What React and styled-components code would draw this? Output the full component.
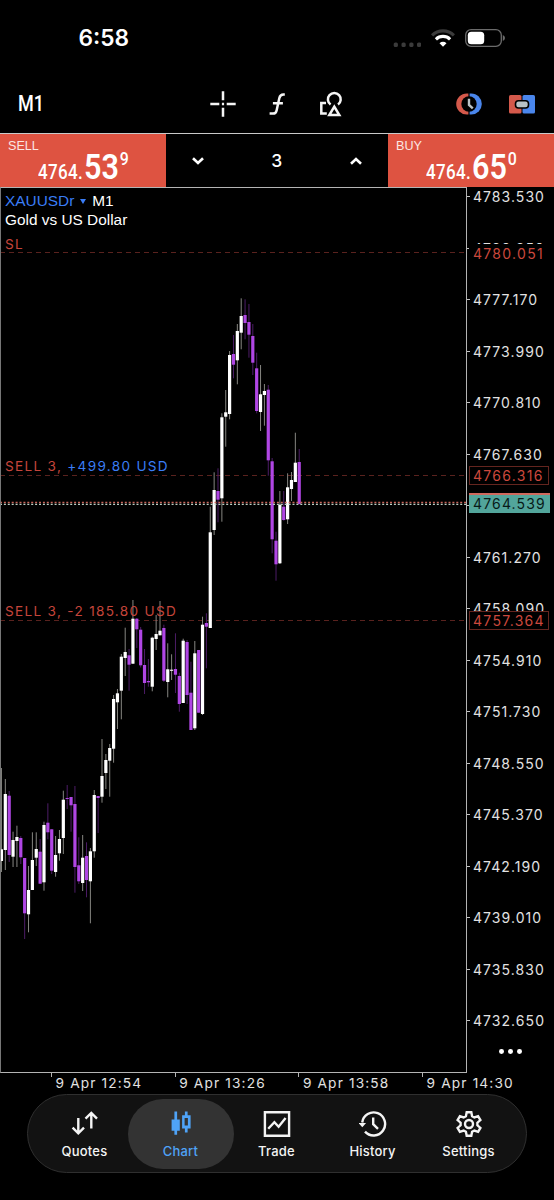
import React, {PureComponent} from "react"
import styled, {createGlobalStyle, css} from "styled-components"

const UI = `Inter, "Noto Sans", sans-serif`
const HELV = `"Liberation Sans", Arial, sans-serif`

const GlobalStyle = createGlobalStyle`
    *{box-sizing:border-box;}
    html,body{margin:0;padding:0;background:#000;}
    body{font-family:${UI};color:#fff;overflow:hidden;}
    svg{display:block;}
`
const Screen = styled.div`
    display:flex;
    flex-direction:column;
    width:554px;
    height:1200px;
    background:#000;
`
const StatusBar = styled.header`
    display:flex;
    justify-content:space-between;
    align-items:center;
    height:75px;
    padding:0 49px 0 78.5px;
`
const Clock = styled.span`
    font-size:22.7px;
    font-weight:600;
    line-height:28px;
    padding-top:1px;
`
const StatusIcons = styled.div`
    display:flex;
    align-items:center;
    gap:10px;
`
const Toolbar = styled.nav`
    display:flex;
    align-items:center;
    height:58px;
    padding:0 19px 0 18px;
`
const Period = styled.span`
    width:192px;
    font-family:Roboto, sans-serif;
    font-size:22px;
    font-weight:500;
    line-height:24px;
    span{
        display:inline-block;
        transform:scaleX(.82);
        transform-origin:left;
    }
`
const Tools = styled.div`
    display:flex;
    align-items:center;
    flex:1;
`
const TradePanel = styled.section`
    display:flex;
    height:54px;
    border-top:1px solid #c9c9c9;
`
const PriceButton = styled.div`
    width:166px;
    padding:5px 8px 0;
    background:#de5341;
    height:53px;
`
const Side = styled.div`
    font-family:${HELV};
    font-size:12.6px;
    line-height:14px;
    color:#fbe6e2;
`
const Quote = styled.div`
    display:flex;
    align-items:baseline;
    height:30px;
    margin:-4px 0 0 29.5px;
    font-family:Roboto, sans-serif;
    font-weight:500;
    line-height:36px;
    transform:scaleX(.86);
    transform-origin:left;
`
const Base = styled.span`
    font-size:19.8px;
    letter-spacing:.4px;
`
const Pips = styled.span`
    font-size:35.5px;
    font-weight:600;
    margin-left:1px;
`
const Point = styled.sup`
    font-size:18.5px;
    line-height:0;
    vertical-align:baseline;
    position:relative;
    top:-14px;
    margin-left:1px;
`
const Volume = styled.div`
    display:flex;
    flex:1;
    align-items:center;
    justify-content:space-between;
    padding:0 26px 0 25.5px;
    font-size:17.5px;
    font-weight:500;
`
const ChartArea = styled.main`
    display:grid;
    grid-template-columns:467px 87px;
    grid-template-rows:886px 21px;
`
const Plot = styled.div`
    position:relative;
    border:1px solid #b4b4b4;
    border-left-color:#777;
`
const Legend = styled.div`
    position:absolute;
    left:4px;
    top:3px;
    font-family:${HELV};
    font-size:15.4px;
    line-height:19px;
    div{white-space:pre;}
    b{font-weight:400;color:#3a7df6;}
    i{
        display:inline-block;
        margin:0 6px 2px 6px;
        border:3px solid transparent;
        border-top:5px solid #3a7df6;
        border-bottom:0;
    }
`
const PriceAxis = styled.div`
    position:relative;
    display:flex;
    flex-direction:column;
`
const axisText = css`
    font-size:14px;
    letter-spacing:1.05px;
    white-space:nowrap;
`
const AxisLabel = styled.div`
    ${axisText}
    display:flex;
    align-items:center;
    height:51.5px;
    color:#e2e2e2;
    &:first-child{
        height:35.25px;
        padding-bottom:16px;
    }
    &::before{
        content:"";
        width:3px;
        height:1px;
        margin-right:3px;
        background:#c4c4c4;
    }
`
const Tag = styled.div`
    ${axisText}
    letter-spacing:1.3px;
    position:absolute;
    left:2px;
    top:${p => p.$y - 187}px;
    width:80px;
    height:19px;
    padding-left:3px;
    line-height:17px;
    color:#cb483d;
    background:#000;
    border:1px solid ${p => p.$frame || "#64251f"};
    ${p => p.$live && css`
        width:81px;
        height:20px;
        line-height:18px;
        letter-spacing:1.15px;
        color:#081a18;
        background:#52a59b;
        border:0 solid #d0695d;
        border-top-width:2px;
        padding-left:4px;
    `}
`
const More = styled.div`
    position:absolute;
    left:32px;
    top:862px;
    display:flex;
    gap:4.2px;
    i{width:4.8px;height:4.8px;border-radius:50%;background:#fff;}
`
const TimeAxis = styled.div`
    grid-column:1 / 3;
    display:flex;
    padding-left:51px;
`
const TimeLabel = styled.div`
    ${axisText}
    font-size:13.7px;
    letter-spacing:1.15px;
    width:123.7px;
    flex:none;
    padding-left:4.5px;
    line-height:21px;
    color:#e2e2e2;
    background:linear-gradient(#b4b4b4,#b4b4b4) 0 0 / 1px 4px no-repeat;
`
const TabBar = styled.nav`
    display:flex;
    align-items:center;
    width:500px;
    height:79px;
    margin:0 0 0 27px;
    padding:0 8.5px;
    border:1px solid #2f2f2f;
    border-radius:40px;
    background:#121212;
`
const Tab = styled.a`
    display:flex;
    flex:none;
    flex-direction:column;
    align-items:center;
    width:96px;
    height:70px;
    padding-top:11px;
    font-size:13px;
    font-weight:500;
    line-height:18px;
    letter-spacing:.2px;
    color:#f4f4f4;
    svg{margin-bottom:4px;}
    ${p => p.$active && css`
        width:106px;
        margin:0 -5px;
        border-radius:35px;
        background:#333;
        color:#4fa3f7;
    `}
`

// [w 涨 / p 跌, 最高, 实体上沿, 实体下沿, 最低]
const CANDLES = [
    ["w", 768, 849.3, 861, 872], ["w", 779, 794, 850, 870], ["p", 791, 795.7, 855, 862],
    ["w", 831.7, 840, 856.7, 867], ["w", 825.7, 837, 841, 867], ["p", 836, 838, 857.3, 864],
    ["p", 858, 858, 913.3, 939], ["w", 866, 890, 914.3, 932.3], ["w", 832.3, 860, 890, 890],
    ["w", 832.3, 849, 857.7, 866], ["p", 839, 851.7, 883.7, 884], ["w", 821.7, 825, 882.3, 890.7],
    ["p", 803.3, 822.7, 832.3, 839.3], ["p", 829, 829.3, 870.7, 874], ["w", 836, 855, 872, 876.7],
    ["w", 830, 839, 853.3, 860.7], ["w", 790.7, 799.7, 838, 854], ["p", 785, 798, 799, 809],
    ["p", 797, 797, 805.3, 831.7], ["p", 786, 804, 867, 892.7], ["p", 837.3, 865.3, 881.3, 884],
    ["w", 835, 857.7, 883, 891], ["p", 842.3, 856, 880, 897.3], ["w", 848, 851.3, 881.3, 923.3],
    ["w", 790, 795, 851.3, 857.7], ["p", 796, 796, 798, 833], ["w", 739, 776, 796.7, 802.7],
    ["w", 754, 760, 773, 789], ["w", 744, 748, 760.7, 796.7], ["w", 695, 699, 748.7, 762.7],
    ["w", 689, 693.3, 702.3, 729], ["w", 654, 656.7, 690.7, 719.3], ["w", 627.7, 652, 658, 676],
    ["p", 649, 655.3, 664.7, 690.7], ["w", 600, 618.7, 663.7, 664], ["p", 618, 618.7, 629.3, 648],
    ["p", 627, 629.7, 665.3, 667.5], ["p", 649, 665, 683, 694], ["p", 659, 681, 682.3, 686.7],
    ["w", 636.7, 637.7, 686.7, 691.3], ["w", 615, 634, 639, 650], ["w", 601, 630.7, 635.3, 635.3],
    ["p", 624.7, 628, 680.7, 682], ["w", 643.3, 669.3, 682, 697.3], ["w", 654.3, 669.7, 670.8, 680],
    ["p", 633.3, 669, 674.7, 693], ["p", 672.7, 676, 704, 711.7], ["w", 638.7, 640.7, 703, 703],
    ["p", 640, 642, 695, 704], ["p", 661.7, 692.7, 730, 730], ["w", 641, 653.3, 728.3, 730],
    ["p", 650, 650, 712.7, 713], ["w", 616.7, 624.7, 714, 715], ["p", 613.3, 623, 626.7, 668.3],
    ["w", 506.7, 532.3, 628, 628], ["w", 472.3, 490, 530, 535], ["p", 468.3, 491, 499.7, 522.3],
    ["w", 413.3, 417.3, 498.3, 521.7], ["w", 390, 412.3, 416.7, 446.7], ["w", 351, 355, 414, 419.3],
    ["p", 335, 354, 364.7, 378.3], ["w", 324, 331, 360.3, 384.3], ["w", 298.3, 316, 332.7, 349.3],
    ["p", 299.3, 315, 323, 339.3], ["p", 304, 322, 334.7, 357.7], ["p", 324, 336, 362.7, 375],
    ["p", 352.7, 368.3, 411, 413.3], ["w", 365, 394.3, 412, 431], ["w", 384, 391, 395, 425.7],
    ["p", 385, 389.7, 460.3, 475.7], ["p", 458, 461.3, 539.3, 553.3], ["p", 531.7, 540.7, 564.3, 580.7],
    ["w", 491, 504.7, 563.3, 564], ["p", 491, 506.7, 520, 520.7], ["w", 473.3, 487.3, 519.3, 524],
    ["w", 472, 480, 489, 501], ["w", 432.7, 462.7, 482, 482], ["p", 449, 462, 504, 504.5]
]
const PRICES = Array.from({length: 17}, (_, i) => (4783.53 - i * 3.18).toFixed(3))
const TIMES = ["9 Apr 12:54", "9 Apr 13:26", "9 Apr 13:58", "9 Apr 14:30"]

const StatusGlyphs = () => (
    <StatusIcons>
        <svg width="28" height="18" viewBox="391 28 28 18" fill="#3b3b3b">
            {[391.7, 399.5, 407.3, 415].map(x => <rect key={x} x={x} y="41.4" width="4.2" height="4.6" rx="1.6"/>)}
        </svg>
        <svg width="24" height="18" viewBox="0 0 24 18" fill="none" strokeWidth="3.1">
            <path d="M1.1 6.3a15.6 15.6 0 0 1 21.8 0" stroke="#3b3b3b"/>
            <path d="M4.9 10.3a10.2 10.2 0 0 1 14.2 0" stroke="#fff"/>
            <path d="M12 17.8l-3.5-3.6a5 5 0 0 1 7 0z" fill="#fff"/>
        </svg>
        <svg width="40" height="18" viewBox="0 0 40 18">
            <rect x=".7" y=".7" width="35.6" height="16.6" rx="5.4" fill="none" stroke="#6b6b6b" strokeWidth="1.3"/>
            <rect x="2.8" y="2.7" width="16.4" height="12.6" rx="3.6" fill="#fff"/>
            <path d="M37.8 6q2.2.9 2.2 3t-2.2 3z" fill="#6b6b6b"/>
        </svg>
    </StatusIcons>
)

const LeftTool = styled.svg`
    fill:none;
    stroke:#f5f5f5;
    stroke-width:2.5;
    margin-right:${p => p.$gap || 0}px;
`

const ToolIcons = () => (
    <Tools>
        <LeftTool $gap={33} width="26" height="26" viewBox="0 0 26 26">
            <path d="M13 .3v9M13 16.7v9M.3 13h9M16.7 13h9M11.9 13h2.2"/>
        </LeftTool>
        <LeftTool $gap={32} width="18" height="24" viewBox="0 0 18 24">
            <path d="M15.800 2.600h-1.400c-2.400 0-3.500 1-4.100 3.600L7.600 18.400c-.5 2.400-1.500 3.200-3.800 3.200H.6M3.900 11.200h10"/>
        </LeftTool>
        <LeftTool width="24" height="26" viewBox="0 0 24 26">
            <path d="M11.600 13.600a6.400 6.400 0 1 1 7.400 0M7 12H2.300v10.500h5.500"/>
            <path d="M15.300 15.600l5 8.500h-10z"/>
        </LeftTool>
        <svg width="26" height="22" viewBox="0 0 26 22" style={{marginLeft: "auto"}}>
            <path d="M12.4.4h-1.6a10.6 10.6 0 0 0 0 21.2h1.6z" fill="#d4594b"/>
            <path d="M13.6.4h1.6a10.6 10.6 0 0 1 0 21.2h-1.6z" fill="#4a86ec"/>
            <circle cx="13" cy="11" r="7.700" fill="#000"/>
            <path d="M13 5.800V12l3.800 3.400" stroke="#b9c2c6" strokeWidth="2.400" fill="none"/>
        </svg>
        <svg width="26" height="19" viewBox="0 0 26 19" style={{marginLeft: 27}}>
            <rect width="12.500" height="18.600" rx="1.600" fill="#d4594b"/>
            <rect x="13.500" width="12.500" height="18.600" rx="1.600" fill="#4a86ec"/>
            <rect x="6.500" y="5.800" width="13" height="7.200" rx="3" fill="#b9c2c6" stroke="#000" strokeWidth="1.600"/>
        </svg>
    </Tools>
)

const Price = ({side, base, pips, point}) => (
    <PriceButton>
        <Side>{side}</Side>
        <Quote><Base>{base}</Base><Pips>{pips}</Pips><Point>{point}</Point></Quote>
    </PriceButton>
)

const icons = {
    Quotes: <path d="M7.3 8v15.200M1.600 17.600l5.700 5.700 5.700-5.700M20.300 18.500V3M14.500 8.700L20.300 3l5.700 5.700"/>,
    Chart: <g stroke="none" fill="currentColor">
        <path d="M7.400 1.500h2.700v8h2.700v11.200h-2.700v4H7.400v-4H4.600V9.500h2.800z"/>
        <path fillRule="evenodd" d="M17.900 1.500h2.700v3.700h3v13.200h-3v4h-2.700v-4h-2.800V5.200h2.800zM17.600 8v7.600h3.300V8z"/>
    </g>,
    Trade: <path d="M1.900 2.200h24.200v23.600H1.900zM5.200 18.800l6.200-6.600 4.200 4.500 7-8.700"/>,
    History: <g>
        <path d="M3.200 12.500A11.500 11.500 0 1 1 6 21.600M14.200 7.500v6.700l4.800 4.600"/>
        <path d="M-.5 13h7.600l-3.800 4.300z" fill="currentColor" stroke="none"/>
    </g>,
    Settings: <g>
        <path d="M11.700 2.300h4.600l.8 3.900 2.300 1.300 3.700-1.300 2.300 3.900-3 2.600v2.600l3 2.600-2.300 3.900-3.700-1.300-2.300 1.300-.8 3.900h-4.600l-.8-3.900-2.300-1.300-3.700 1.300-2.300-3.900 3-2.600v-2.600l-3-2.600 2.300-3.900 3.700 1.300 2.300-1.300z"/>
        <circle cx="14" cy="14" r="4"/>
    </g>
}

class Chart extends PureComponent {
    getCandles = () => CANDLES.map(([type, high, top, bottom, low], i) => {
        const x = 1.45 + i * 3.867
        return (
            <g key={i}>
                <rect x={x - .5} y={high} width="1" height={low - high} fill={type === "w" ? "#858580" : "#4c1c66"}/>
                <rect x={x - 1.6} y={top} width="3.2" height={bottom - top} fill={type === "w" ? "#fff" : "#b046e4"}/>
            </g>
        )
    })

    render() {
        return (
            <ChartArea>
                <Plot>
                    <svg width="465" height="884" viewBox="1 188 465 884" fontFamily={UI} fontSize="13.6" letterSpacing="1.3">
                        <g stroke="#5a221e" strokeDasharray="5 4">
                            <path d="M0 252.500h467M0 475.500h467M0 620.500h467"/>
                        </g>
                        {this.getCandles()}
                        <g strokeWidth="1.4" strokeDasharray="2 1.900">
                            <path d="M0 502.500h467" stroke="#c8655b"/>
                            <path d="M0 504.400h467" stroke="#b9cfc4"/>
                        </g>
                        <g fill="#c5453b">
                            <text x="5" y="249">SL</text>
                            <text x="5" y="471">SELL 3, <tspan fill="#3a7df6">+499.80 USD</tspan></text>
                            <text x="5" y="616">SELL 3, -2 185.80 USD</text>
                        </g>
                    </svg>
                    <Legend>
                        <div><b>XAUUSDr</b><i/>M1</div>
                        <div>Gold vs US Dollar</div>
                    </Legend>
                </Plot>
                <PriceAxis>
                    {PRICES.map(p => <AxisLabel key={p}>{p}</AxisLabel>)}
                    <Tag $y={244} $frame="#000">4780.051</Tag>
                    <Tag $y={466}>4766.316</Tag>
                    <Tag $y={493} $live>4764.539</Tag>
                    <Tag $y={611}>4757.364</Tag>
                    <More><i/><i/><i/></More>
                </PriceAxis>
                <TimeAxis>
                    {TIMES.map(t => <TimeLabel key={t}>{t}</TimeLabel>)}
                </TimeAxis>
            </ChartArea>
        )
    }
}

class App extends PureComponent {
    state = {active: "Chart"}

    render() {
        const {active} = this.state
        return (
            <Screen>
                <GlobalStyle/>
                <StatusBar>
                    <Clock>6:58</Clock>
                    <StatusGlyphs/>
                </StatusBar>
                <Toolbar>
                    <Period><span>M1</span></Period>
                    <ToolIcons/>
                </Toolbar>
                <TradePanel>
                    <Price side="SELL" base="4764." pips="53" point="9"/>
                    <Volume>
                        <svg width="12" height="8" viewBox="0 0 12 8" fill="none" stroke="#fff" strokeWidth="2.6"><path d="M1 1.200l5 4.800 5-4.800"/></svg>
                        3
                        <svg width="12" height="8" viewBox="0 0 12 8" fill="none" stroke="#fff" strokeWidth="2.6"><path d="M1 6.800L6 2l5 4.800"/></svg>
                    </Volume>
                    <Price side="BUY" base="4764." pips="65" point="0"/>
                </TradePanel>
                <Chart/>
                <TabBar>
                    {Object.keys(icons).map(name => (
                        <Tab key={name} $active={name === active} onClick={() => this.setState({active: name})}>
                            <svg width="28" height="28" viewBox="0 0 28 28" fill="none" stroke="currentColor" strokeWidth="2.4">{icons[name]}</svg>
                            {name}
                        </Tab>
                    ))}
                </TabBar>
            </Screen>
        )
    }
}

export default App
